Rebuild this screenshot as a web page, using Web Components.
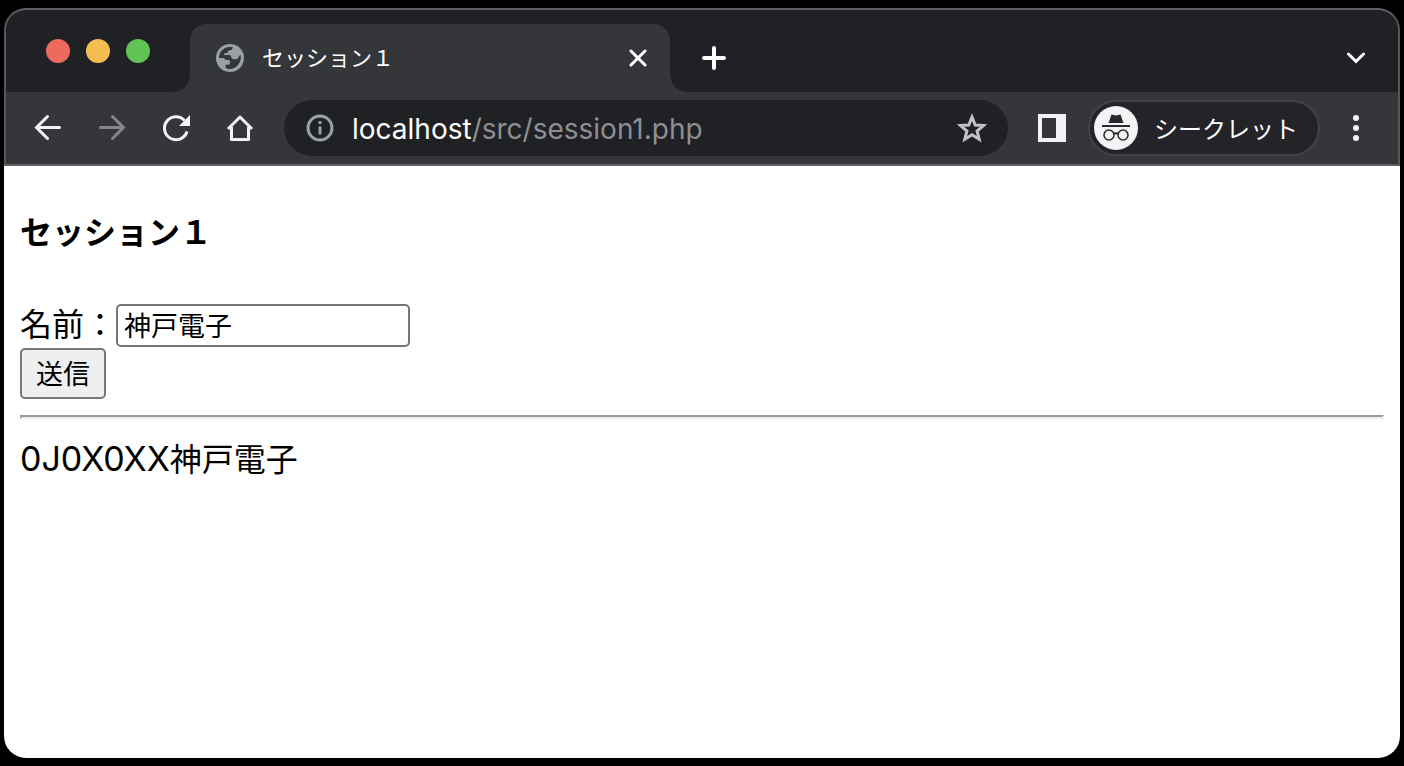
<!DOCTYPE html>
<html lang="ja">
<head>
<meta charset="utf-8">
<title>セッション１</title>
<style>
html { background: #000; }
body {
  margin: 0; padding: 8px 4px; box-sizing: border-box; min-height: 100vh; display: flex; flex-direction: column;
  background: #000; color: #000; font-family: "Noto Sans CJK JP", sans-serif;
}
</style>
</head>
<body>
<browser-window>
  <tab-strip slot="chrome"><browser-tab>セッション１</browser-tab></tab-strip>
  <tool-bar slot="chrome">
    <address-field slot="address"><span slot="host">localhost</span><span slot="path">/src/session1.php</span></address-field>
    <incognito-chip slot="profile">シークレット</incognito-chip>
  </tool-bar>
  <session-page></session-page>
</browser-window>

<script>
const define = (name, html) => customElements.define(name, class extends HTMLElement {
  constructor() {
    super();
    this.attachShadow({ mode: "open" }).innerHTML = html;
  }
});

const buttonReset = `
  button { border: 0; padding: 0; background: none; color: inherit; display: grid; place-items: center; cursor: pointer; }
  svg { display: block; }
`;

define("browser-window", `
  <style>
    :host { display: flex; flex-direction: column; flex: 1; }
    header { border: 2px solid #5f6063; border-right-color: #55565a; border-left-color: #55565a; border-radius: 22px 22px 0 0; background: #202124; overflow: hidden; color: #fff; }
    main { flex: 1; background: #fff; border-radius: 0 0 22px 22px; }
  </style>
  <header><slot name="chrome"></slot></header>
  <main><slot></slot></main>
`);

define("tab-strip", `
  <style>
    ${buttonReset}
    :host { display: flex; align-items: flex-end; height: 82px; box-sizing: border-box; padding: 0 18px 0 40px; }
    .lights { display: flex; gap: 16px; margin-right: 40px; padding-bottom: 29px; }
    .lights button { width: 24px; height: 24px; border-radius: 50%; }
    .red { background: #ed6a5e; } .amber { background: #f5bd4f; } .green { background: #61c454; }
    .icon { width: 48px; height: 68px; margin-left: 20px; }
    .end { margin-left: auto; }
  </style>
  <div class="lights">
    <button class="red" aria-label="閉じる"></button>
    <button class="amber" aria-label="しまう"></button>
    <button class="green" aria-label="拡大"></button>
  </div>
  <slot></slot>
  <button class="icon" aria-label="新しいタブ"><svg width="24" height="24" fill="none" stroke="#fff" stroke-width="4" stroke-linecap="round"><path d="M12 2v20M2 12h20"/></svg></button>
  <button class="icon end" aria-label="タブを検索"><svg width="20" height="12" fill="none" stroke="#fff" stroke-width="3" stroke-linecap="round" stroke-linejoin="miter"><path d="M2.5 2l7.5 7.5L17.500 2"/></svg></button>
`);

define("browser-tab", `
  <style>
    ${buttonReset}
    :host { position: relative; display: flex; align-items: center; flex: 0 1 480px; height: 68px; box-sizing: border-box; padding: 0 8px 0 26px; background: #35363a; border-radius: 16px 16px 0 0; }
    :host::before, :host::after { content: ""; position: absolute; bottom: 0; width: 16px; height: 16px; }
    :host::before { right: 100%; background: radial-gradient(circle at 0 0, transparent 15px, #35363a 16px); }
    :host::after { left: 100%; background: radial-gradient(circle at 100% 0, transparent 15px, #35363a 16px); }
    .title { flex: 1; margin-left: 18px; padding-bottom: 4px; font-size: 22px; line-height: 32px; white-space: nowrap; overflow: hidden; }
    button { width: 48px; height: 48px; }
  </style>
  <svg width="28" height="28" viewBox="0 0 84 84"><circle cx="42" cy="42" r="42" fill="#9aa0a6"/><path fill="#35363a" d="M9 42C9 25 20 12 38 9h12c-1 5-1 9-8 10-5 1-7 3-7 8h-8c-2 0-3 5-2 7l4-1h14c3 3 2 10 7 12 4 2 14 1 16-2 2-5 5-9 8-10 4 24-14 42-34 42-4 0-8 0-11-2V62h8c5 0 5-3 5-9 0-5-3-5-8-5h-5c-2-3-3-6-8-6z"/></svg>
  <span class="title"><slot></slot></span>
  <button aria-label="タブを閉じる"><svg width="18" height="18" fill="none" stroke="#fff" stroke-width="3" stroke-linecap="round"><path d="M2 2l14 14M16 2L2 16"/></svg></button>
`);

define("tool-bar", `
  <style>
    ${buttonReset}
    :host { display: flex; align-items: center; height: 72px; padding: 0 18px; background: #35363a; color: #f1f3f4; }
    nav { display: flex; gap: 16px; }
    button { width: 48px; height: 48px; flex: none; }
    slot[name=address] { display: block; flex: 1; margin: 0 20px; min-width: 0; }
    slot[name=profile] { display: block; margin: 0 12px; }
  </style>
  <nav>
    <button aria-label="戻る"><svg width="32" height="32" fill="none" stroke="currentColor" stroke-width="3" stroke-linecap="round"><path d="M27.500 15.500H5M15.500 4.500l-11 11 11 11"/></svg></button>
    <button aria-label="進む" disabled><svg width="32" height="32" fill="none" stroke="#86878a" stroke-width="3" stroke-linecap="round"><path d="M4.500 15.500h22.500M16.500 4.500l11 11-11 11"/></svg></button>
    <button aria-label="再読み込み"><svg width="32" height="32" fill="none"><path d="M27 19.500A11.500 11.500 0 1 1 24.500 8.500" stroke="currentColor" stroke-width="3"/><path d="M30 3v11H19z" fill="currentColor"/></svg></button>
    <button aria-label="ホーム"><svg width="32" height="32" fill="none" stroke="currentColor" stroke-width="3" stroke-linejoin="round"><path d="M4 17L16 5l12 12M7.500 15v12.500h17V15" stroke-linecap="butt"/></svg></button>
  </nav>
  <slot name="address"></slot>
  <button aria-label="サイドパネル"><svg width="28" height="28"><path fill="currentColor" fill-rule="evenodd" d="M0 0h28v28H0zM4 4v20h14V4z"/></svg></button>
  <slot name="profile"></slot>
  <button aria-label="メニュー"><svg width="8" height="28" fill="currentColor"><circle cx="4" cy="4" r="3"/><circle cx="4" cy="14" r="3"/><circle cx="4" cy="24" r="3"/></svg></button>
`);

define("address-field", `
  <style>
    ${buttonReset}
    :host { display: flex; align-items: center; height: 56px; box-sizing: border-box; padding: 0 12px 0 20px; border-radius: 28px; background: #202124; }
    .info { width: 32px; height: 32px; }
    .star { width: 48px; height: 48px; }
    .url { flex: 1; margin-left: 16px; padding-top: 2px; font-family: Inter, sans-serif; font-size: 28px; line-height: 36px; color: #8e8f92; white-space: nowrap; overflow: hidden; outline: 0; }
    .host { color: #fff; }
  </style>
  <button class="info" aria-label="サイト情報"><svg width="28" height="28" fill="none"><circle cx="14" cy="14" r="12" stroke="#9aa0a6" stroke-width="3"/><path d="M14 7v3M14 12.500v8" stroke="#9aa0a6" stroke-width="3"/></svg></button>
  <div class="url" role="textbox" tabindex="0" aria-label="アドレス"><span class="host"><slot name="host"></slot></span><slot name="path"></slot></div>
  <button class="star" aria-label="ブックマーク"><svg width="32" height="32" fill="none" stroke="#c1c2c4" stroke-width="3"><path d="M16 5l3.200 8 8.300.500-6.400 5.500 2.100 8.300L16 22.800l-7.200 4.500 2.100-8.300-6.400-5.500 8.300-.500z"/></svg></button>
`);

define("incognito-chip", `
  <style>
    ${buttonReset}
    button { display: flex; align-items: center; width: 232px; height: 56px; box-sizing: border-box; padding: 0 4px; border: 2px solid #414246; border-radius: 28px; background: #242428; color: #fff; font-family: inherit; font-size: 24px; line-height: 32px; }
    span { margin-left: 16px; white-space: nowrap; }
  </style>
  <button>
    <svg width="44" height="44" fill="none"><circle cx="22" cy="22" r="22" fill="#f1f3f4"/><path d="M14.500 17l3-8.500c2 0 3 1 4.500 1s2.500-1 4.500-1l3 8.500z" fill="#28292c"/><path d="M8 20h28M19.500 28q2.500-1.500 5 0" stroke="#28292c" stroke-width="2"/><circle cx="15" cy="29" r="5" stroke="#28292c" stroke-width="1.500"/><circle cx="29" cy="29" r="5" stroke="#28292c" stroke-width="1.500"/></svg>
    <span><slot></slot></span>
  </button>
`);

define("session-page", `
  <style>
    :host { display: block; padding: 40px 16px 16px; font-size: 32px; line-height: 48px; }
    h4 { margin: 0 0 44px; font-size: 32px; line-height: 48px; }
    form { display: flex; flex-direction: column; align-items: flex-start; }
    .row { display: flex; align-items: flex-start; height: 50px; max-width: 100%; }
    input, button { box-sizing: border-box; font-family: inherit; font-size: 27px; color: #000; border: 2px solid #767676; border-radius: 5px; }
    input { width: 294px; height: 43px; min-width: 0; margin: 6px 0 0; padding: 0 6px 2px; background: #fff; }
    button { height: 51px; margin: 0; padding: 0 14px 2px; background: #efefef; line-height: 44px; }
    hr { margin: 16px 0 14px; border: 2px solid; border-color: #9a9a9a #eee #eee #9a9a9a; }
    p { margin: 0; }
    .id { font-family: Inter, sans-serif; font-size: 34px; }
  </style>
  <h4>セッション１</h4>
  <form onsubmit="return false">
    <div class="row"><label for="name">名前：</label><input id="name" type="text" value="神戸電子"></div>
    <button type="submit">送信</button>
  </form>
  <hr>
  <p><span class="id">0J0X0XX</span>神戸電子</p>
`);
</script>
</body>
</html>
